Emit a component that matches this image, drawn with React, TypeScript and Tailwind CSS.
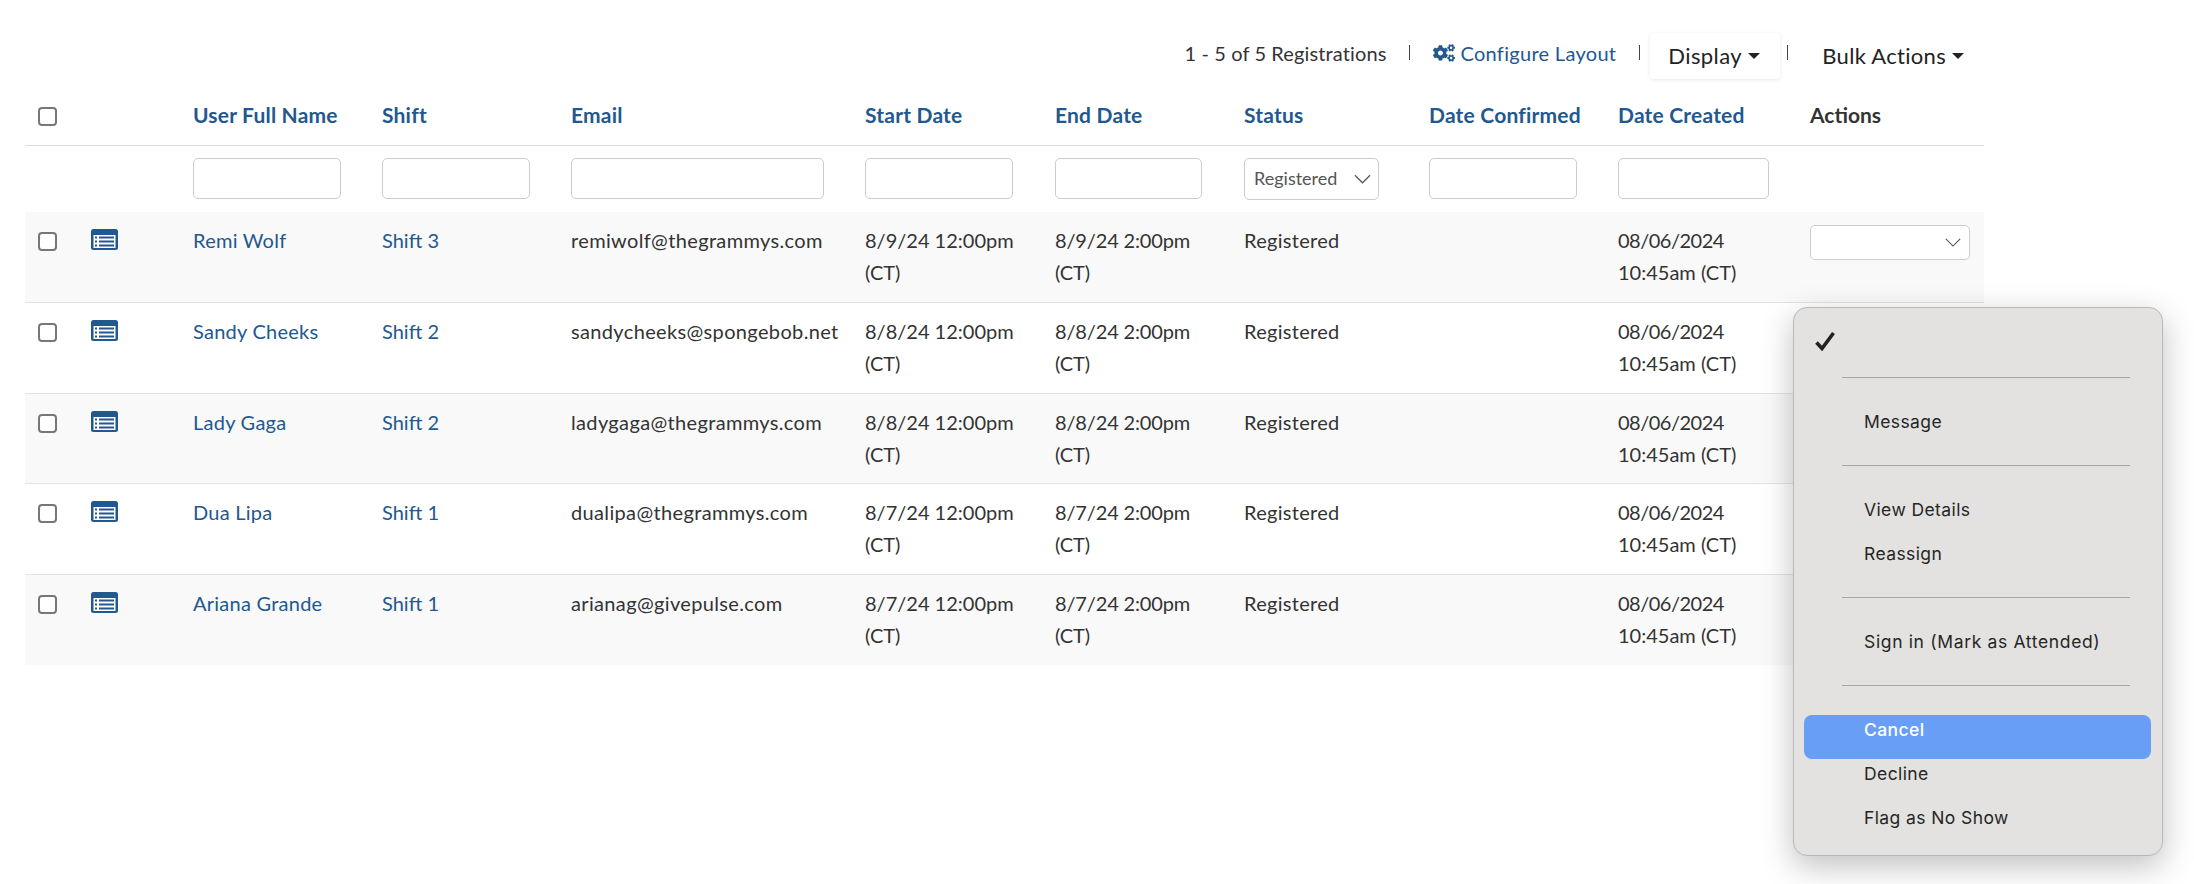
import React from 'react';
import { FaCogs } from 'react-icons/fa';

const rows = [
  { name: 'Remi Wolf', shift: 'Shift 3', email: 'remiwolf@thegrammys.com', day: '8/9/24' },
  { name: 'Sandy Cheeks', shift: 'Shift 2', email: 'sandycheeks@spongebob.net', day: '8/8/24' },
  { name: 'Lady Gaga', shift: 'Shift 2', email: 'ladygaga@thegrammys.com', day: '8/8/24' },
  { name: 'Dua Lipa', shift: 'Shift 1', email: 'dualipa@thegrammys.com', day: '8/7/24' },
  { name: 'Ariana Grande', shift: 'Shift 1', email: 'arianag@givepulse.com', day: '8/7/24' },
];

const colWidths = [53, 102, 189, 189, 294, 190, 189, 185, 189, 192, 187];

function Chevron({ className }: { className: string }) {
  return (
    <svg viewBox="0 0 18 10" className={className} fill="none" stroke="#555555" strokeWidth="1.3">
      <path d="M1 1l8 8 8-8" />
    </svg>
  );
}

function Caret() {
  return <span className="ml-[6px] mt-[1px] h-0 w-0 border-x-[6px] border-t-[6px] border-x-transparent border-t-[#222222]" />;
}

function Checkbox() {
  return <div className="h-[19px] w-[19px] rounded-[4px] border-2 border-[#777777] bg-white" />;
}

function ListIcon() {
  return (
    <svg viewBox="0 0 27 21" className="h-[21px] w-[27px]">
      <rect width="27" height="21" rx="2.5" fill="#22588f" />
      <rect x="2.5" y="6" width="22" height="13" fill="#ffffff" />
      <g fill="#22588f">
        <rect x="4" y="7.5" width="2" height="2" />
        <rect x="4" y="11.5" width="2" height="2" />
        <rect x="4" y="15.5" width="2" height="2" />
        <rect x="8" y="7.5" width="15" height="2" />
        <rect x="8" y="11.5" width="15" height="2" />
        <rect x="8" y="15.5" width="15" height="2" />
      </g>
    </svg>
  );
}

function FilterInput({ width }: { width: string }) {
  return <input readOnly className={`${width} block h-[41px] rounded-[5px] border border-[#cccccc] bg-white`} />;
}

function Divider() {
  return <span className="h-[15px] w-px bg-[#444444]" />;
}

function MenuItem({ label, active, wide }: { label: string; active?: boolean; wide?: boolean }) {
  return (
    <div
      className={`ml-[10px] mr-[11px] h-[44px] rounded-[8px] pl-[60px] text-[17.5px] leading-[30px] ${
        wide ? 'tracking-[0.65px]' : 'tracking-[0.4px]'
      } ${active ? 'bg-[#699ef7] font-medium text-white' : 'text-[#262626]'}`}
    >
      {label}
    </div>
  );
}

function MenuSep() {
  return <div className="mb-[29px] ml-[48px] mr-[32px] mt-[14px] h-px bg-[#a6a6a4]" />;
}

export default function App() {
  return (
    <div className="relative h-[884px] w-[2194px] overflow-hidden bg-white font-['Lato',sans-serif] text-[20px] text-[#333333]">
      <div className="flex h-[95px] items-start justify-end pr-[230px] pt-[33px]">
        <span className="mt-[8px] leading-[24px] tracking-[0.12px]">1 - 5 of 5 Registrations</span>
        <span className="ml-[23px] mt-[12px] flex"><Divider /></span>
        <a className="ml-[23px] mt-[8px] flex items-center leading-[24px] tracking-[0.3px] text-[#22588f]">
          <FaCogs className="mr-[5px] h-[22px] w-[22px]" />
          Configure Layout
        </a>
        <span className="ml-[23px] mt-[12px] flex"><Divider /></span>
        <div className="ml-[10px] flex h-[46px] w-[130px] items-center rounded-[4px] pb-[2px] pl-[18px] text-[22px] tracking-[0.4px] text-[#222222] shadow-[0_1px_4px_rgba(0,0,0,0.09)]">
          Display
          <Caret />
        </div>
        <span className="ml-[7px] mt-[12px] flex"><Divider /></span>
        <div className="ml-[34px] flex h-[46px] items-center pb-[2px] text-[22px] tracking-[0.3px] text-[#222222]">
          Bulk Actions
          <Caret />
        </div>
      </div>

      <table className="ml-[25px] w-[1959px] table-fixed border-collapse">
        <colgroup>
          {colWidths.map((w, i) => (
            <col key={i} style={{ width: w }} />
          ))}
        </colgroup>
        <thead>
          <tr className="h-[50px] border-b border-[#dddddd] text-left text-[21px] text-[#22588f]">
            <th className="pb-[7px] pl-[13px]"><Checkbox /></th>
            <th />
            {['User Full Name', 'Shift', 'Email', 'Start Date', 'End Date', 'Status', 'Date Confirmed', 'Date Created'].map((h) => (
              <th key={h} className="pb-[10px] pl-[13px] font-bold leading-[24px] tracking-[0.2px]">{h}</th>
            ))}
            <th className="pb-[10px] pl-[13px] font-bold leading-[24px] text-[#333333]">Actions</th>
          </tr>
        </thead>
        <tbody>
          <tr className="h-[67px]">
            <td />
            <td />
            <td className="pl-[13px] align-top pt-[12px]"><FilterInput width="w-[148px]" /></td>
            <td className="pl-[13px] align-top pt-[12px]"><FilterInput width="w-[148px]" /></td>
            <td className="pl-[13px] align-top pt-[12px]"><FilterInput width="w-[253px]" /></td>
            <td className="pl-[13px] align-top pt-[12px]"><FilterInput width="w-[148px]" /></td>
            <td className="pl-[13px] align-top pt-[12px]"><FilterInput width="w-[147px]" /></td>
            <td className="pl-[13px] align-top pt-[12px]">
              <div className="flex h-[42px] w-[135px] items-center justify-between rounded-[5px] border border-[#cccccc] bg-white pl-[9px] pr-[7px] text-[18px] text-[#555555]">
                Registered
                <Chevron className="h-[10px] w-[17px]" />
              </div>
            </td>
            <td className="pl-[13px] align-top pt-[12px]"><FilterInput width="w-[148px]" /></td>
            <td className="pl-[13px] align-top pt-[12px]"><FilterInput width="w-[151px]" /></td>
            <td />
          </tr>
          {rows.map((r, i) => (
            <tr
              key={r.name}
              className={`h-[90.5px] align-top leading-[32px] ${i % 2 === 0 ? 'bg-[#f9f9f9]' : 'bg-white'} ${
                i < rows.length - 1 ? 'border-b border-[#e3e3e3]' : ''
              }`}
            >
              <td className="pl-[13px] pt-[20px]"><Checkbox /></td>
              <td className="pl-[13px] pt-[17px]"><ListIcon /></td>
              <td className="pl-[13px] pt-[12px] tracking-[0.25px] text-[#22588f]">{r.name}</td>
              <td className="pl-[13px] pt-[12px] text-[#22588f]">{r.shift}</td>
              <td className="pl-[13px] pt-[12px] tracking-[0.35px]">{r.email}</td>
              <td className="pl-[13px] pt-[12px]">{r.day} 12:00pm<br />(CT)</td>
              <td className="pl-[13px] pt-[12px] tracking-[-0.15px]">{r.day} 2:00pm<br />(CT)</td>
              <td className="pl-[13px] pt-[12px] tracking-[0.3px]">Registered</td>
              <td />
              <td className="pl-[13px] pt-[12px]">
                <span className="tracking-[-0.5px]">08/06/2024</span>
                <br />
                10:45am (CT)
              </td>
              <td className="pl-[13px] pt-[13px]">
                {i === 0 && (
                  <div className="flex h-[35px] w-[160px] items-center justify-end rounded-[5px] border border-[#cccccc] bg-white pr-[8px]">
                    <Chevron className="h-[9px] w-[16px]" />
                  </div>
                )}
              </td>
            </tr>
          ))}
        </tbody>
      </table>

      {/* native popup menu sits over the table */}
      <div className="absolute left-[1793px] top-[307px] h-[549px] w-[370px] rounded-[14px] border border-[#b9b8b6] bg-[#e3e2e0] pt-[11px] font-['Inter',sans-serif] shadow-[0_10px_32px_rgba(0,0,0,0.25)]">
        <div className="flex h-[44px] items-center pl-[21px]">
          <svg viewBox="0 0 20 20" className="h-[20px] w-[20px]" fill="none" stroke="#222222" strokeWidth="3.6">
            <path d="M1.5 11.5l5.5 6L18.5 2" />
          </svg>
        </div>
        <MenuSep />
        <MenuItem label="Message" />
        <MenuSep />
        <MenuItem label="View Details" />
        <MenuItem label="Reassign" />
        <MenuSep />
        <MenuItem label="Sign in (Mark as Attended)" wide />
        <MenuSep />
        <MenuItem label="Cancel" active />
        <MenuItem label="Decline" />
        <MenuItem label="Flag as No Show" />
      </div>
    </div>
  );
}
